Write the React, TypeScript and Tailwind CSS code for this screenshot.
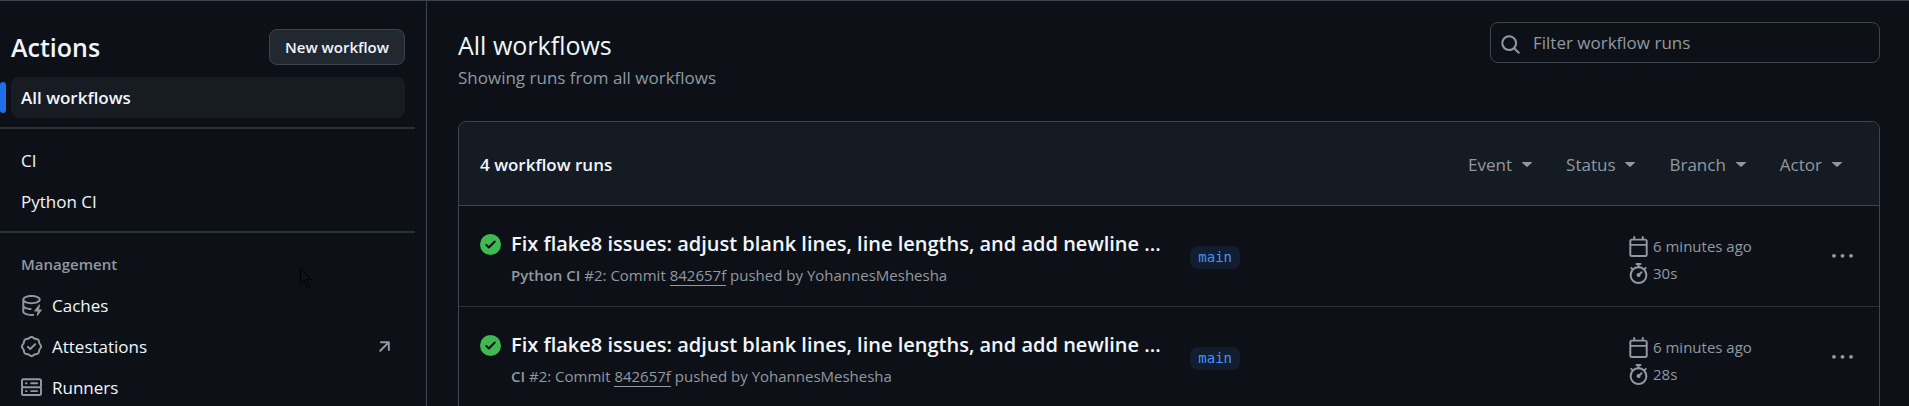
import type { ReactNode } from "react";

type IconProps = { className?: string; paths: string[] };

function Icon({ className = "", paths }: IconProps) {
  return (
    <svg viewBox="0 0 16 16" fill="currentColor" aria-hidden="true" className={`size-[21px] shrink-0 ${className}`}>
      {paths.map((d) => (
        <path key={d} d={d} />
      ))}
    </svg>
  );
}

const icons = {
  calendar: [
    "M4.75 0a.75.75 0 0 1 .75.75V2h5V.75a.75.75 0 0 1 1.5 0V2h1.25c.966 0 1.75.784 1.75 1.75v10.5A1.75 1.75 0 0 1 13.25 16H2.75A1.75 1.75 0 0 1 1 14.25V3.75C1 2.784 1.784 2 2.75 2H4V.75A.75.75 0 0 1 4.75 0ZM2.5 7.5v6.75c0 .138.112.25.25.25h10.5a.25.25 0 0 0 .25-.25V7.5Zm10.75-4H2.75a.25.25 0 0 0-.25.25V6h11V3.75a.25.25 0 0 0-.25-.25Z",
  ],
  stopwatch: [
    "M5.75.75A.75.75 0 0 1 6.5 0h3a.75.75 0 0 1 0 1.5h-.75v1l-.001.041a6.724 6.724 0 0 1 3.464 1.435l.007-.006.75-.75a.749.749 0 0 1 1.275.326.749.749 0 0 1-.215.734l-.75.75-.006.007a6.75 6.75 0 1 1-10.548 0L2.72 5.03l-.75-.75a.751.751 0 0 1 .018-1.042.751.751 0 0 1 1.042-.018l.75.75.007.006A6.72 6.72 0 0 1 7.25 2.541V1.5H6.5a.75.75 0 0 1-.75-.75ZM8 14.5a5.25 5.25 0 1 0-.001-10.501A5.25 5.25 0 0 0 8 14.5Zm.389-6.7 1.33-1.33a.75.75 0 1 1 1.061 1.06L9.45 8.861A1.503 1.503 0 0 1 8 10.75a1.499 1.499 0 1 1 .389-2.95Z",
  ],
  success: [
    "M8 16A8 8 0 1 1 8 0a8 8 0 0 1 0 16Zm3.78-9.72a.751.751 0 0 0-.018-1.042.751.751 0 0 0-1.042-.018L6.75 9.19 5.28 7.72a.751.751 0 0 0-1.042.018.751.751 0 0 0-.018 1.042l2 2a.75.75 0 0 0 1.06 0Z",
  ],
  search: [
    "M10.68 11.74a6 6 0 0 1-7.922-8.982 6 6 0 0 1 8.982 7.922l3.04 3.04a.749.749 0 0 1-.326 1.275.749.749 0 0 1-.734-.215ZM11.5 7a4.499 4.499 0 1 0-8.997 0A4.499 4.499 0 0 0 11.5 7Z",
  ],
  kebab: [
    "M8 9a1.5 1.5 0 1 0 0-3 1.5 1.5 0 0 0 0 3ZM1.5 9a1.5 1.5 0 1 0 0-3 1.5 1.5 0 0 0 0 3Zm13 0a1.5 1.5 0 1 0 0-3 1.5 1.5 0 0 0 0 3Z",
  ],
  server: [
    "M1.75 1h12.5c.966 0 1.75.784 1.75 1.75v4c0 .372-.116.717-.314 1 .198.283.314.628.314 1v4a1.75 1.75 0 0 1-1.75 1.75H1.75A1.75 1.75 0 0 1 0 12.75v-4c0-.358.109-.707.314-1a1.739 1.739 0 0 1-.314-1v-4C0 1.784.784 1 1.75 1ZM1.5 2.75v4c0 .138.112.25.25.25h12.5a.25.25 0 0 0 .25-.25v-4a.25.25 0 0 0-.25-.25H1.75a.25.25 0 0 0-.25.25Zm.25 5.75a.25.25 0 0 0-.25.25v4c0 .138.112.25.25.25h12.5a.25.25 0 0 0 .25-.25v-4a.25.25 0 0 0-.25-.25ZM7 4.75A.75.75 0 0 1 7.75 4h4.5a.75.75 0 0 1 0 1.5h-4.5A.75.75 0 0 1 7 4.75ZM7.75 10h4.5a.75.75 0 0 1 0 1.5h-4.5a.75.75 0 0 1 0-1.5ZM3 4.75A.75.75 0 0 1 3.75 4h.5a.75.75 0 0 1 0 1.5h-.5A.75.75 0 0 1 3 4.75ZM3.75 10h.5a.75.75 0 0 1 0 1.5h-.5a.75.75 0 0 1 0-1.5Z",
  ],
  verified: [
    "m9.585.52.929.68c.153.112.331.186.518.215l1.138.175a2.678 2.678 0 0 1 2.24 2.24l.174 1.139c.029.187.103.365.215.518l.68.928a2.677 2.677 0 0 1 0 3.17l-.68.928a1.174 1.174 0 0 0-.215.518l-.175 1.138a2.678 2.678 0 0 1-2.241 2.241l-1.138.175a1.17 1.17 0 0 0-.518.215l-.928.68a2.677 2.677 0 0 1-3.17 0l-.928-.68a1.174 1.174 0 0 0-.518-.215L3.83 14.41a2.678 2.678 0 0 1-2.24-2.24l-.175-1.138a1.17 1.17 0 0 0-.215-.518l-.68-.928a2.677 2.677 0 0 1 0-3.17l.68-.928c.112-.153.186-.331.215-.518l.175-1.14a2.678 2.678 0 0 1 2.24-2.24l1.139-.175c.187-.029.365-.103.518-.215l.928-.68a2.677 2.677 0 0 1 3.17 0ZM7.303 1.728l-.927.68a2.67 2.67 0 0 1-1.18.489l-1.137.174a1.179 1.179 0 0 0-.987.987l-.174 1.136a2.677 2.677 0 0 1-.489 1.18l-.68.928a1.18 1.18 0 0 0 0 1.394l.68.927c.256.348.424.753.489 1.18l.174 1.137c.078.509.478.909.987.987l1.136.174a2.67 2.67 0 0 1 1.18.489l.928.68c.414.305.979.305 1.394 0l.927-.68a2.67 2.67 0 0 1 1.18-.489l1.137-.174a1.18 1.18 0 0 0 .987-.987l.174-1.136a2.67 2.67 0 0 1 .489-1.18l.68-.928a1.176 1.176 0 0 0 0-1.394l-.68-.927a2.686 2.686 0 0 1-.489-1.18l-.174-1.137a1.179 1.179 0 0 0-.987-.987l-1.136-.174a2.677 2.677 0 0 1-1.18-.489l-.928-.68a1.176 1.176 0 0 0-1.394 0ZM11.28 6.78l-3.75 3.75a.75.75 0 0 1-1.06 0L4.72 8.78a.751.751 0 0 1 .018-1.042.751.751 0 0 1 1.042-.018L7 8.94l3.22-3.22a.751.751 0 0 1 1.042.018.751.751 0 0 1 .018 1.042Z",
  ],
  cache: [
    "M2.5 5.724V8c0 .248.238.7 1.169 1.159.874.43 2.144.745 3.62.822a.75.75 0 1 1-.078 1.498c-1.622-.085-3.102-.432-4.204-.975a5.565 5.565 0 0 1-.507-.28V12.5c0 .133.058.318.282.551.227.237.591.483 1.101.707 1.015.447 2.47.742 4.117.742.406 0 .802-.018 1.183-.052a.751.751 0 1 1 .134 1.494C8.89 15.98 8.45 16 8 16c-1.805 0-3.475-.32-4.721-.869-.623-.274-1.173-.619-1.579-1.041-.408-.425-.7-.964-.7-1.59v-9c0-.626.292-1.165.7-1.591.406-.42.956-.766 1.579-1.04C4.525.32 6.195 0 8 0c1.806 0 3.476.32 4.721.869.623.274 1.173.619 1.579 1.041.408.425.7.964.7 1.59 0 .626-.292 1.165-.7 1.591-.406.42-.956.766-1.578 1.04C11.475 6.68 9.805 7 8 7c-1.805 0-3.475-.32-4.721-.869a6.15 6.15 0 0 1-.779-.407Zm0-2.224c0 .133.058.318.282.551.227.237.591.483 1.101.707C4.898 5.205 6.353 5.5 8 5.5c1.646 0 3.101-.295 4.118-.742.508-.224.873-.471 1.1-.708.224-.232.282-.417.282-.55 0-.133-.058-.318-.282-.551-.227-.237-.591-.483-1.101-.707C11.102 1.795 9.647 1.5 8 1.5c-1.646 0-3.101.295-4.118.742-.508.224-.873.471-1.1.708-.224.232-.282.417-.282.55Z",
    "M14.49 7.582a.375.375 0 0 0-.66-.313l-3.625 4.625a.375.375 0 0 0 .295.606h2.127l-.619 2.922a.375.375 0 0 0 .666.304l3.125-4.125A.375.375 0 0 0 15.5 11h-1.778l.769-3.418Z",
  ],
  arrow: [
    "M4.53 4.75A.75.75 0 0 1 5.28 4h6.01a.75.75 0 0 1 .75.75v6.01a.75.75 0 0 1-1.5 0v-4.2l-5.26 5.261a.749.749 0 0 1-1.275-.326.749.749 0 0 1 .215-.734L9.48 5.5h-4.2a.75.75 0 0 1-.75-.75Z",
  ],
};

function NavItem({ icon, external, children }: { icon?: string[]; external?: boolean; children: ReactNode }) {
  return (
    <li>
      <a href="#" className="flex h-[41px] items-center gap-[10px] rounded-lg px-[10px]">
        {icon && <Icon paths={icon} className="text-[#9198a1]" />}
        <span className="flex-1">{children}</span>
        {external && <Icon paths={icons.arrow} className="text-[#9198a1]" />}
      </a>
    </li>
  );
}

function Sidebar() {
  return (
    <aside className="w-[427px] shrink-0 border-r border-[#3d444d] pr-[11px] pt-7">
      <div className="flex items-center justify-between pl-[11px] pr-[10px]">
        <h2 className="text-[25px] leading-9 font-semibold">Actions</h2>
        <button type="button" className="h-9 rounded-lg border border-[#3d444d] bg-[#212830] px-[15px] text-[15px] font-semibold">
          New workflow
        </button>
      </div>
      <nav aria-label="Actions workflows" className="text-[17px]">
        <div className="mt-3 flex items-center gap-[5px] pr-[10px]">
          <span className="h-[31px] w-[6px] rounded-sm bg-[#1f6feb]" />
          <a href="#" aria-current="page" className="flex h-[41px] flex-1 items-center rounded-lg bg-[#171b22] px-[10px] font-semibold">
            All workflows
          </a>
        </div>
        <hr className="mt-[9px] mb-[11px] border-t-2 border-[#2c323a]" />
        <ul className="px-[10px] pl-[11px]">
          <NavItem>CI</NavItem>
          <NavItem>Python CI</NavItem>
        </ul>
        <hr className="mt-[9px] mb-[11px] border-t-2 border-[#2c323a]" />
        <h3 className="flex h-[41px] items-center px-[21px] text-[15px] font-semibold text-[#9198a1]">Management</h3>
        <ul className="pr-[10px] pl-[11px]">
          <NavItem icon={icons.cache}>Caches</NavItem>
          <NavItem icon={icons.verified} external>
            Attestations
          </NavItem>
          <NavItem icon={icons.server}>Runners</NavItem>
        </ul>
      </nav>
    </aside>
  );
}

const filters = ["Event", "Status", "Branch", "Actor"];

type Run = { id: number; title: string; workflow: string; commit: string; author: string; age: string; duration: string };

const runs: Run[] = [
  {
    id: 1,
    title: "Fix flake8 issues: adjust blank lines, line lengths, and add newline ...",
    workflow: "Python CI",
    commit: "842657f",
    author: "YohannesMeshesha",
    age: "6 minutes ago",
    duration: "30s",
  },
  {
    id: 2,
    title: "Fix flake8 issues: adjust blank lines, line lengths, and add newline ...",
    workflow: "CI",
    commit: "842657f",
    author: "YohannesMeshesha",
    age: "6 minutes ago",
    duration: "28s",
  },
];

function RunRow({ run }: { run: Run }) {
  return (
    <li className="flex h-[101px] items-center border-b border-[#2c323a]">
      <div className="flex w-[51.5%] gap-[10px] pl-[21px] pt-[6px]">
        <Icon paths={icons.success} className="mt-[6px] text-[#3fb950]" />
        <div className="min-w-0">
          <a href="#" className="block truncate text-[20px] leading-8 font-[550]">
            {run.title}
          </a>
          <p className="truncate text-[15px] leading-[30px] text-[#9198a1]">
            <span className="font-semibold">{run.workflow}</span> #2: Commit{" "}
            <a href="#" className="border-b border-[#9198a1]">
              {run.commit}
            </a>{" "}
            pushed by {run.author}
          </p>
        </div>
      </div>
      <div className="flex-1">
        <a
          href="#"
          className="inline-flex h-[23px] items-center rounded-lg bg-[#121d2f] px-2 font-['DejaVu_Sans_Mono',monospace] text-[14px] text-[#4493f8]"
        >
          main
        </a>
      </div>
      <div className="flex w-[251px] items-center justify-between pr-[26px]">
        <div className="flex flex-col gap-[6px] pt-2 text-[15px] leading-[21px] text-[#9198a1]">
          <span className="flex items-center gap-1">
            <Icon paths={icons.calendar} />
            {run.age}
          </span>
          <span className="flex items-center gap-1">
            <Icon paths={icons.stopwatch} />
            {run.duration}
          </span>
        </div>
        <button type="button" aria-label="Show options" className="text-[#9198a1]">
          <Icon paths={icons.kebab} />
        </button>
      </div>
    </li>
  );
}

function Pointer() {
  return (
    <svg viewBox="0 0 12 20" fill="none" stroke="#000" aria-hidden="true" className="absolute left-[300px] top-[267px] h-5 w-3">
      <path d="M.5.5v15.3l3.6-3.4 2.6 6.2c.9 1.500 3.300.400 2.700-1.200L6.900 11.500h4.600z" />
    </svg>
  );
}

export default function App() {
  return (
    <div className="relative flex h-screen overflow-hidden border-t border-[#3d444d] bg-[#0d1117] font-['Open_Sans','Noto_Sans',sans-serif] text-[#f0f6fc]">
      <Sidebar />
      <main className="min-w-0 flex-1 pl-[31px] pr-[29px] pt-[21px]">
        <header className="flex items-start justify-between">
          <div className="pt-[5px]">
            <h1 className="text-[25px] leading-9">All workflows</h1>
            <p className="text-[17px] leading-[30px] text-[#9198a1]">Showing runs from all workflows</p>
          </div>
          <label className="flex h-[41px] w-[390px] items-center gap-3 rounded-lg border border-[#3d444d] px-[9px] text-[#9198a1]">
            <Icon paths={icons.search} className="mt-[3px]" />
            <input
              type="search"
              aria-label="Filter workflow runs"
              placeholder="Filter workflow runs"
              className="min-w-0 flex-1 bg-transparent text-[17px] outline-none placeholder:text-[#9198a1]"
            />
          </label>
        </header>
        <section className="mt-7 rounded-t-lg border border-[#3d444d]">
          <div className="flex h-[84px] items-center justify-between rounded-t-lg border-b border-[#3d444d] bg-[#151b23] pt-[2px] pl-[21px] pr-[37px]">
            <h2 className="text-[17px] font-semibold">4 workflow runs</h2>
            <div className="flex gap-[34px] text-[17px] text-[#9198a1]">
              {filters.map((name) => (
                <button key={name} type="button" className="flex items-center gap-[10px]">
                  {name}
                  <svg viewBox="0 0 10 5" fill="currentColor" aria-hidden="true" className="h-[5px] w-[10px]">
                    <path d="M.4 0h9.200c.35 0 .5.4.25.65L5.400 4.850a.6.6 0 0 1-.8 0L.15.65C-.1.4.05 0 .4 0Z" />
                  </svg>
                </button>
              ))}
            </div>
          </div>
          <ul>
            {runs.map((run) => (
              <RunRow key={run.id} run={run} />
            ))}
          </ul>
        </section>
      </main>
      <Pointer />
    </div>
  );
}
